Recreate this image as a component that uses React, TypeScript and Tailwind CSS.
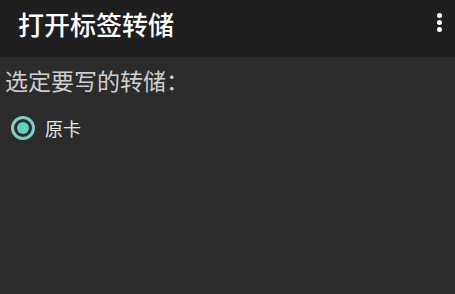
export default function App() {
  return (
    <div
      className="flex h-[294px] w-[455px] flex-col bg-[#2c2c2c]"
      style={{ fontFamily: '"Noto Sans CJK SC", "Noto Sans", sans-serif' }}
    >
      <header className="flex h-[57px] shrink-0 items-start justify-between bg-[#1f1f1f] pl-[18px] pr-[12px] pt-[11px]">
        <h1 className="text-[26px] font-medium leading-[26px] text-white">打开标签转储</h1>
        <div className="mt-[2px] flex flex-col gap-[2px] pr-[1px]">
          <span className="block h-[5px] w-[5px] rounded-full bg-white" />
          <span className="block h-[5px] w-[5px] rounded-full bg-white" />
          <span className="block h-[5px] w-[5px] rounded-full bg-white" />
        </div>
      </header>
      <main className="flex flex-col px-[5px] pt-[9px]">
        <p className="text-[23px] leading-[28px] text-[#cfcfcf]">选定要写的转储：</p>
        <label className="mt-[22px] flex items-center gap-[10px] pl-[6px]">
          <span className="flex h-[24px] w-[24px] items-center justify-center rounded-full border-[3px] border-[#80cbc4]">
            <span className="block h-[12px] w-[12px] rounded-full bg-[#5fd0c0]" />
          </span>
          <span className="text-[18px] leading-none text-[#e8e8e8]">原卡</span>
        </label>
      </main>
    </div>
  )
}
